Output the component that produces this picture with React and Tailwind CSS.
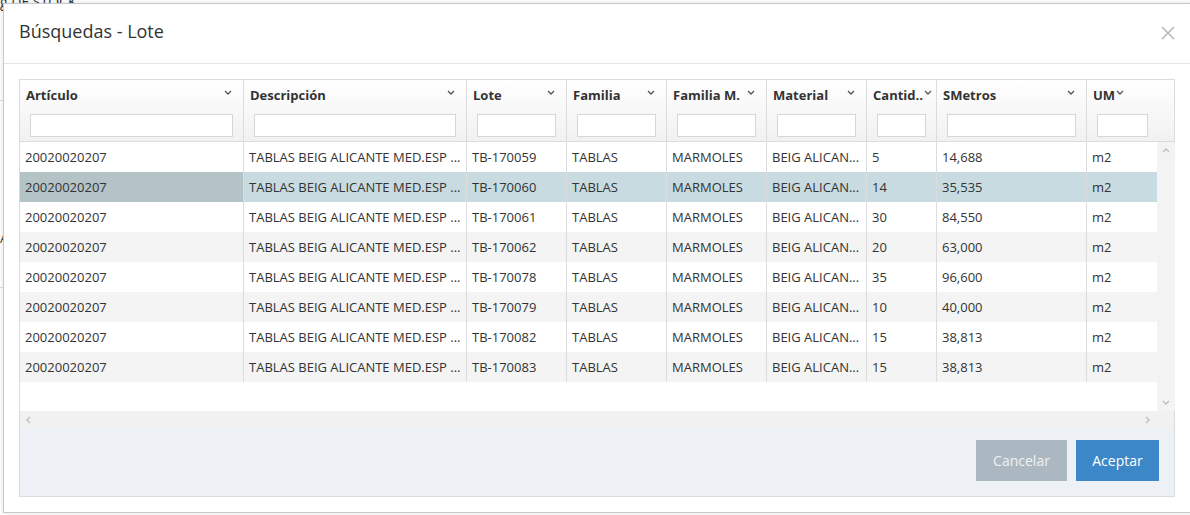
import React from 'react'

const COLS = [
  { key: 'art', label: 'Artículo', w: 224 },
  { key: 'desc', label: 'Descripción', w: 223 },
  { key: 'lote', label: 'Lote', w: 100 },
  { key: 'fam', label: 'Familia', w: 100 },
  { key: 'famm', label: 'Familia M.', w: 100 },
  { key: 'mat', label: 'Material', w: 100 },
  { key: 'cant', label: 'Cantid..', w: 70 },
  { key: 'smet', label: 'SMetros', w: 150 },
  { key: 'um', label: 'UM', w: 71 },
]

const ROWS = [
  ['TB-170059', '5', '14,688'],
  ['TB-170060', '14', '35,535'],
  ['TB-170061', '30', '84,550'],
  ['TB-170062', '20', '63,000'],
  ['TB-170078', '35', '96,600'],
  ['TB-170079', '10', '40,000'],
  ['TB-170082', '15', '38,813'],
  ['TB-170083', '15', '38,813'],
]

const SELECTED = 1

function Chevron({ dir = 'down', className = '', sw = 1.1 }) {
  const pts = {
    down: '1,1 4,4 7,1',
    up: '1,4 4,1 7,4',
    left: '4,1 1,4 4,7',
    right: '1,1 4,4 1,7',
  }[dir]
  const box = dir === 'left' || dir === 'right' ? '0 0 5 8' : '0 0 8 5'
  return (
    <svg viewBox={box} className={className} fill="none" stroke="currentColor" strokeWidth={sw}>
      <polyline points={pts} />
    </svg>
  )
}

function HeaderCell({ col, last }) {
  const narrow = col.w <= 71
  return (
    <div
      className={`shrink-0 h-full flex flex-col ${last ? '' : 'border-r border-[#dcdcdc]'}`}
      style={{ width: col.w }}>
      <div className={`flex items-center h-[31px] pl-[6px] ${narrow ? 'pr-[2px]' : 'pr-[11px]'}`}>
        <span className="font-bold text-[13px] text-[#333] whitespace-nowrap">{col.label}</span>
        {narrow
          ? <Chevron className="shrink-0 w-[8px] h-[5px] text-[#555] ml-[1px] -mt-[6px]" sw={1.3} />
          : <Chevron className="shrink-0 w-[8px] h-[5px] text-[#555] ml-auto -mt-[6px]" sw={1.3} />}
      </div>
      <div className="px-[10px] pt-[3px]">
        <div className="h-[23px] bg-white border border-[#d6d6d6]" />
      </div>
    </div>
  )
}

export default function App() {
  return (
    <div className="relative w-[1190px] h-[515px] bg-white overflow-hidden" style={{ fontFamily: '"Open Sans", sans-serif' }}>
      {/* page behind the modal */}
      <div className="absolute left-0 top-[-6px] text-[14px] leading-[16px] text-[#333] whitespace-nowrap">g DE STOCK</div>
      <div className="absolute left-0 top-[100px] w-[3px] h-px bg-[#ddd]" />
      <div className="absolute left-0 top-[232px] text-[13px] text-[#333] leading-none">A</div>
      <div className="absolute left-0 top-[287px] w-[3px] h-px bg-[#ddd]" />

      {/* modal */}
      <div className="absolute left-[3px] top-[3px] w-[1192px] h-[510px] bg-white border border-[#c8c8c8] shadow-[0_0_6px_rgba(0,0,0,0.12)] flex flex-col">
        <div className="h-[60px] shrink-0 flex items-center pl-[15px] pr-[18px] border-b border-[#e5e5e5]">
          <h1 className="text-[18px] text-[#333] leading-none -mt-[5px]">Búsquedas - Lote</h1>
          <svg viewBox="0 0 14 14" className="ml-auto w-[14px] h-[14px] mr-[1px] -mt-[2px] text-[#b8b8b8]" stroke="currentColor" strokeWidth="1.6">
            <line x1="1" y1="1" x2="13" y2="13" />
            <line x1="13" y1="1" x2="1" y2="13" />
          </svg>
        </div>

        <div className="pt-[15px] pl-[15px]">
          <div className="w-[1156px] border border-[#dcdcdc]">
            {/* header */}
            <div className="flex h-[62px] bg-gradient-to-b from-white to-[#f1f1f1] border-b border-[#dcdcdc]">
              {COLS.map((c, i) => (
                <HeaderCell key={c.key} col={c} last={i === COLS.length - 1} />
              ))}
              <div className="w-[18px] shrink-0" />
            </div>

            {/* body */}
            <div className="flex">
              <div className="w-[1137px] shrink-0 bg-white">
                {ROWS.map((r, i) => {
                  const sel = i === SELECTED
                  const bg = sel ? 'bg-[#c8dbe0]' : i % 2 === 1 ? 'bg-[#f4f4f4]' : 'bg-white'
                  const vals = [
                    '20020020207',
                    'TABLAS BEIG ALICANTE MED.ESP ...',
                    r[0],
                    'TABLAS',
                    'MARMOLES',
                    'BEIG ALICAN...',
                    r[1],
                    r[2],
                    'm2',
                  ]
                  return (
                    <div key={i} className={`flex h-[30px] ${bg}`}>
                      {COLS.map((c, j) => (
                        <div
                          key={c.key}
                          className={`shrink-0 flex items-center pl-[5px] pt-[2px] text-[13px] text-[#333] whitespace-nowrap overflow-hidden ${j < COLS.length - 1 ? 'border-r border-[#dcdcdc]' : ''} ${sel && j === 0 ? 'bg-[#b3c3c6]' : ''}`}
                          style={{ width: c.w }}>
                          {vals[j]}
                        </div>
                      ))}
                    </div>
                  )
                })}
                <div className="h-[29px]" />
              </div>
              <div className="w-[18px] shrink-0 bg-[#f3f3f3] flex flex-col items-center justify-between py-[6px]">
                <Chevron dir="up" className="w-[8px] h-[5px] text-[#bdbdbd]" sw={1.3} />
                <Chevron dir="down" className="w-[8px] h-[5px] text-[#bdbdbd]" sw={1.3} />
              </div>
            </div>

            {/* horizontal scrollbar */}
            <div className="h-[17px] bg-[#f1f1f1] flex items-center justify-between pl-[6px] pr-[24px]">
              <Chevron dir="left" className="w-[5px] h-[8px] text-[#bdbdbd]" sw={1.3} />
              <Chevron dir="right" className="w-[5px] h-[8px] text-[#bdbdbd]" sw={1.3} />
            </div>

            {/* footer */}
            <div className="h-[68px] bg-[#edf1f6] flex items-start justify-end gap-[9px] pt-[12px] pr-[15px]">
              <button className="w-[91px] h-[41px] bg-[#acb8c1] text-[#eef1f3] text-[14px]">Cancelar</button>
              <button className="w-[83px] h-[41px] bg-[#3c87c8] text-white text-[14px]">Aceptar</button>
            </div>
          </div>
        </div>
      </div>
    </div>
  )
}
